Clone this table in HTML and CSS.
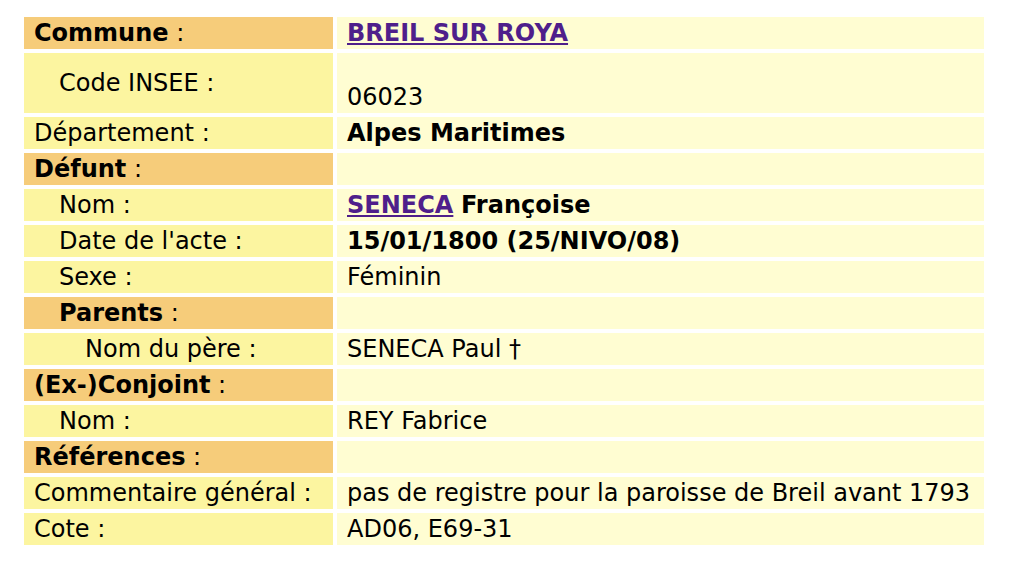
FILE: index.html
```html
<!DOCTYPE html>
<html lang="fr">
<head>
<meta charset="utf-8">
<title>Acte</title>
<link rel="stylesheet" href="styles.css">
</head>
<body>
<div class="wrap">
<table class="fiche">
  <colgroup><col class="c-label"><col class="c-value"></colgroup>
  <tr><td class="head"><b>Commune</b> :</td><td class="val"><a href="#" class="lnk"><b>BREIL SUR ROYA</b></a></td></tr>
  <tr class="tall"><td class="lab ind1">Code INSEE :</td><td class="val bottom"><br>06023</td></tr>
  <tr><td class="lab">Département :</td><td class="val"><b>Alpes Maritimes</b></td></tr>
  <tr><td class="head"><b>Défunt</b> :</td><td class="val"></td></tr>
  <tr><td class="lab ind1">Nom :</td><td class="val"><a href="#" class="lnk"><b>SENECA</b></a> <b>Françoise</b></td></tr>
  <tr><td class="lab ind1">Date de l'acte :</td><td class="val"><b>15/01/1800 (25/NIVO/08)</b></td></tr>
  <tr><td class="lab ind1">Sexe :</td><td class="val">Féminin</td></tr>
  <tr><td class="head ind1"><b>Parents</b> :</td><td class="val"></td></tr>
  <tr><td class="lab ind2">Nom du père :</td><td class="val">SENECA Paul †</td></tr>
  <tr><td class="head"><b>(Ex-)Conjoint</b> :</td><td class="val"></td></tr>
  <tr><td class="lab ind1">Nom :</td><td class="val">REY Fabrice</td></tr>
  <tr><td class="head"><b>Références</b> :</td><td class="val"></td></tr>
  <tr><td class="lab">Commentaire général :</td><td class="val">pas de registre pour la paroisse de Breil avant 1793</td></tr>
  <tr><td class="lab">Cote :</td><td class="val">AD06, E69-31</td></tr>
</table>
</div>
</body>
</html>
```

FILE: styles.css
```css
html, body {
  margin: 0;
  padding: 0;
  background: #ffffff;
}
.wrap {
  padding: 13px 0 0 20px;
}
.fiche {
  border-collapse: separate;
  border-spacing: 4px;
  width: 968px;
  table-layout: fixed;
  font-family: "DejaVu Sans", Verdana, sans-serif;
  font-size: 24px;
  line-height: 26px;
  color: #000000;
}
.c-label { width: 309px; }
.c-value { width: 647px; }
.fiche td {
  padding: 3px 10px;
  height: 26px;
  vertical-align: middle;
  white-space: nowrap;
}
.fiche .tall td { height: 54px; }
.fiche td.bottom { vertical-align: bottom; }
.head { background: #f6cc7a; }
.lab { background: #fcf5a0; }
.val { background: #fffdd2; }
.ind1 { padding-left: 35px !important; }
.ind2 { padding-left: 61px !important; }
.lnk {
  color: #4f1f8b;
  text-decoration: underline;
}
```
